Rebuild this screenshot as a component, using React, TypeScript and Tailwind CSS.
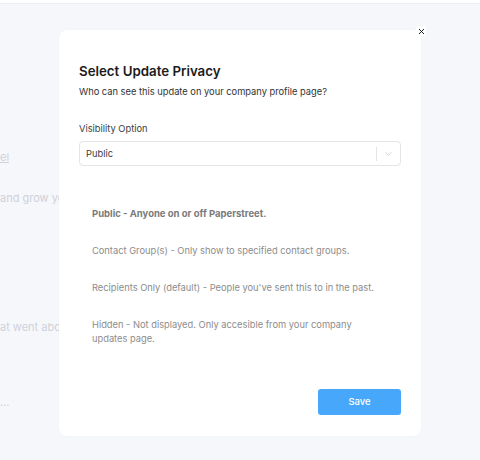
import { X } from 'lucide-react'

const OPTIONS = [
  { text: 'Public - Anyone on or off Paperstreet.', bold: true },
  { text: 'Contact Group(s) - Only show to specified contact groups.', bold: false },
  { text: "Recipients Only (default) - People you've sent this to in the past.", bold: false },
  { text: 'Hidden - Not displayed. Only accesible from your company updates page.', bold: false },
]

function PageBehind() {
  return (
    <div className="flex flex-col text-[11px] text-[#cfd2d9]">
      <div className="h-[4px] border-b border-[#eceef3] bg-white" />
      <div className="mt-[145px] underline">el</div>
      <div className="mt-[24px] whitespace-nowrap">and grow your business</div>
      <div className="mt-[113px] whitespace-nowrap">at went above</div>
      <div className="mt-[58px]">...</div>
    </div>
  )
}

function PrivacyModal() {
  return (
    <div className="absolute left-[59px] top-[30px] w-[362px] rounded-lg bg-white px-5 pb-[21px] pt-[33px] shadow-[0_0_2px_rgba(0,0,0,0.04)]">
      {/* close */}
      <button className="absolute -right-[5px] -top-[4px] flex h-[10px] w-[10px] items-center justify-center bg-white text-[#111]">
        <X className="h-[9px] w-[9px]" strokeWidth={2.5} />
      </button>

      <h2 className="text-[13.3px] font-semibold leading-4 text-[#1c1c1c]">Select Update Privacy</h2>
      <p className="mt-[6px] text-[9.3px] leading-[14px] text-[#333]">
        Who can see this update on your company profile page?
      </p>

      <div className="mt-[23px] text-[9.3px] leading-[14px] text-[#3d3d3d]">Visibility Option</div>
      <div className="mt-[5px] flex h-[25px] items-center rounded-[4px] border border-[#e2e4e8] pl-[6px]">
        <span className="flex-1 text-[9.3px] text-[#3a3a3a]">Public</span>
        <span className="h-[14px] w-px bg-[#e2e4e8]" />
        <svg viewBox="0 0 10 6" className="mx-[8px] h-[4px] w-[7px]" fill="none" stroke="#c4c7cc" strokeWidth="1.2">
          <path d="M1 1l4 4 4-4" strokeLinecap="round" strokeLinejoin="round" />
        </svg>
      </div>

      <div className="mt-[41px] flex flex-col gap-[23px] pl-[13px] pr-[20px]">
        {OPTIONS.map((o) => (
          <p
            key={o.text}
            className={`leading-[14px] ${o.bold ? 'text-[9.5px] font-bold text-[#7a7a7a]' : 'text-[9.3px] text-[#8c8c8c]'}`}
          >
            {o.text}
          </p>
        ))}
      </div>

      <div className="mt-[43px] flex justify-end">
        <button className="h-[26px] w-[83px] rounded-[3px] bg-[#47a7fa] text-[9.5px] font-medium text-white">
          Save
        </button>
      </div>
    </div>
  )
}

export default function App() {
  return (
    <div
      className="relative h-[460px] w-[480px] overflow-hidden bg-[#f6f7fb]"
      style={{ fontFamily: 'Inter, "Noto Sans", sans-serif' }}
    >
      <PageBehind />
      <PrivacyModal />
    </div>
  )
}
